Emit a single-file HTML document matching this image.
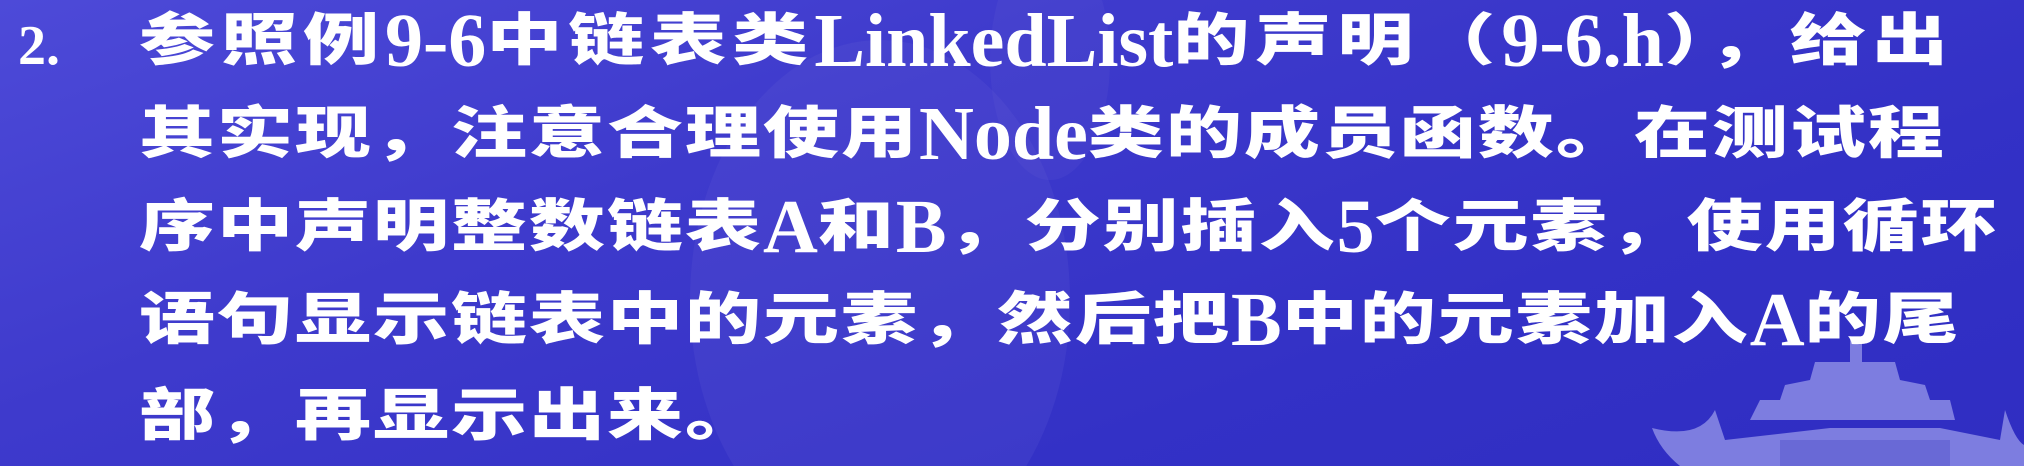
<!DOCTYPE html>
<html><head><meta charset="utf-8"><style>
html,body{margin:0;padding:0}
body{width:2024px;height:466px;overflow:hidden;position:relative;
background:linear-gradient(160deg,#4d4ad8 0%,#3e3acc 35%,#3331c6 70%,#2f2dc2 100%);
font-family:"Liberation Serif",serif;color:#fff}
.l{position:absolute;left:139px;white-space:nowrap;font-size:76px;line-height:74px;height:74px;font-weight:bold}
.c{display:inline-block;font-family:"Noto Sans CJK SC","WenQuanYi Zen Hei",sans-serif;font-weight:900;font-size:76px;transform:scaleY(.74);transform-origin:50% 60%;letter-spacing:2px}
.w .c{letter-spacing:6px}
.n{position:absolute;left:18px;top:0;font-size:56px;font-weight:bold;font-family:"Liberation Serif",serif}
</style></head><body>
<svg width="2024" height="466" style="position:absolute;left:0;top:0">
<ellipse cx="880" cy="300" rx="190" ry="260" fill="#6a66d8" opacity=".18"/>
<ellipse cx="1050" cy="60" rx="60" ry="120" fill="#6a66d8" opacity=".15"/>
<g fill="#7d7de0">
<rect x="1850" y="337" width="12" height="30"/>
<path d="M1815 362 L1895 362 L1900 380 L1925 385 L1930 400 L1845 400 L1780 400 L1785 385 L1810 380Z"/>
<path d="M1760 400 L1950 400 L1955 420 L1750 420Z"/>
<path d="M1652 428 Q1700 440 1715 410 L1725 440 L1830 428 L1940 428 L2000 440 L2005 410 Q2015 440 2024 445 L2024 466 L1680 466 Q1660 450 1652 428Z"/>
</g>
<g fill="#5555cc"><rect x="1780" y="440" width="170" height="26" opacity=".5"/></g>
</svg>
<div class="n" style="top:14px">2.</div>
<div class="l w" style="top:-4px"><span class="c">参照例</span>9-6<span class="c">中链表类</span>LinkedList<span class="c">的声明（</span>9-6.h<span class="c">），给出</span></div>
<div class="l" style="top:89px"><span class="c">其实现，注意合理使用</span>Node<span class="c">类的成员函数。在测试程</span></div>
<div class="l" style="top:182px"><span class="c">序中声明整数链表</span>A<span class="c">和</span>B<span class="c">，分别插入</span>5<span class="c">个元素，使用循环</span></div>
<div class="l" style="top:275px"><span class="c">语句显示链表中的元素，然后把</span>B<span class="c">中的元素加入</span>A<span class="c">的尾</span></div>
<div class="l" style="top:371px"><span class="c">部，再显示出来。</span></div>
</body></html>
